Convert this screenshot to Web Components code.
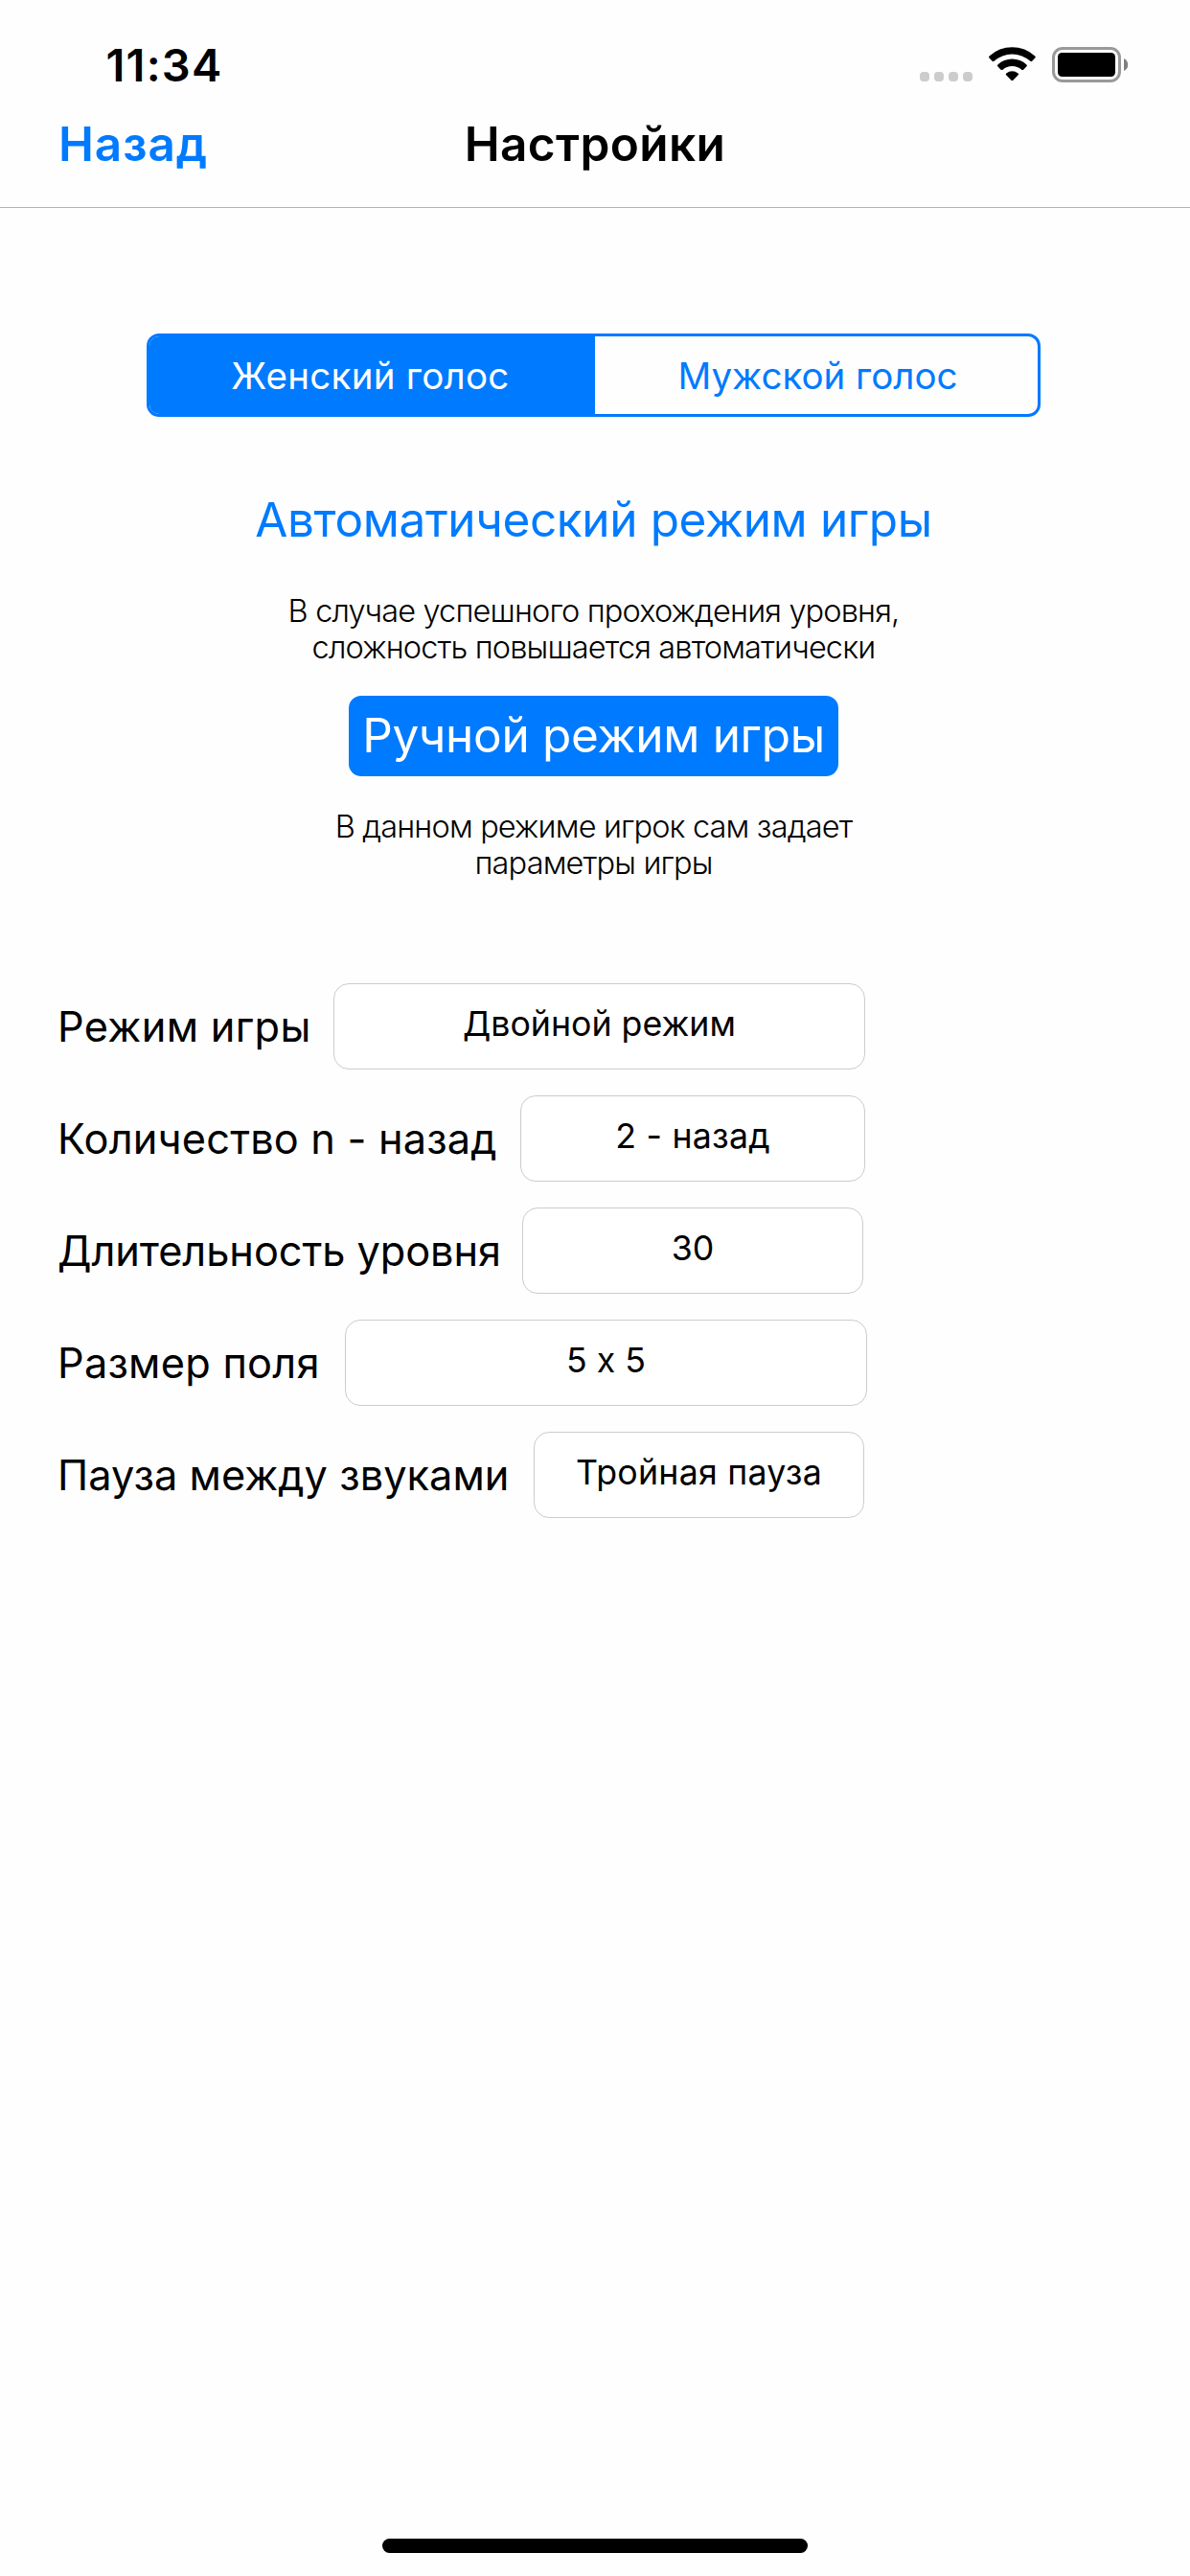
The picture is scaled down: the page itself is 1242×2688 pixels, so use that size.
<!DOCTYPE html>
<html lang="ru">
<head>
<meta charset="utf-8">
<title>Настройки</title>
<style>
  body {
    margin: 0;
    width: 1242px;
    height: 2688px;
    overflow: hidden;
    background-color: #fefefe;
    color: #000;
    font-family: Inter, "Liberation Sans", sans-serif;
    /* keep "5 x 5" from turning into a multiplication sign */
    font-feature-settings: "calt" 0;
  }
</style>
</head>
<body>
<settings-screen>
  <status-bar slot="header" time="11:34"></status-bar>
  <nav-bar slot="header">
    <span slot="back">Назад</span>
    <span slot="title">Настройки</span>
  </nav-bar>

  <segmented-control>
    <segment-item selected style="--track: 0.27px">Женский голос</segment-item>
    <segment-item>Мужской голос</segment-item>
  </segmented-control>

  <mode-option style="--track: -0.37px">
    Автоматический режим игры
    <span slot="note">В случае успешного прохождения уровня,<br>сложность повышается автоматически</span>
  </mode-option>
  <mode-option selected style="--track: -0.3px">
    Ручной режим игры
    <span slot="note">В данном режиме игрок сам задает<br>параметры игры</span>
  </mode-option>

  <settings-list>
    <settings-row label="Режим игры" style="--label: 288px; --field: 555px; --label-track: 0.32px">Двойной режим</settings-row>
    <settings-row label="Количество n - назад" style="--label: 483px; --field: 360px; --label-track: 0.19px; --field-track: 0.24px">2 - назад</settings-row>
    <settings-row label="Длительность уровня" style="--label: 485px; --field: 356px; --label-track: -0.06px">30</settings-row>
    <settings-row label="Размер поля" style="--label: 300px; --field: 545px; --label-track: 0.25px">5 x 5</settings-row>
    <settings-row label="Пауза между звуками" style="--label: 497px; --field: 345px; --label-track: 0.05px; --field-track: 0.24px">Тройная пауза</settings-row>
  </settings-list>

  <home-indicator slot="footer"></home-indicator>
</settings-screen>

<script>
class SettingsScreen extends HTMLElement {
  constructor() {
    super();
    this._root = this.attachShadow({ mode: 'open' });
  }

  connectedCallback() {
    this._root.innerHTML = `
      <style>
        :host {
          display: flex;
          flex-direction: column;
          width: 1242px;
          height: 2688px;
        }

        main {
          flex-grow: 1;
          display: flex;
          flex-direction: column;
          align-items: center;
          padding-top: 131px;
        }
      </style>
      <header><slot name="header"></slot></header>
      <main><slot></slot></main>
      <slot name="footer"></slot>
    `;
  }
}

class StatusBar extends HTMLElement {
  constructor() {
    super();
    this._root = this.attachShadow({ mode: 'open' });
  }

  connectedCallback() {
    this._root.innerHTML = `
      <style>
        :host {
          display: flex;
          justify-content: space-between;
          align-items: flex-start;
          box-sizing: border-box;
          height: 88px;
          padding: 48px 64px 0 110.5px;
        }

        .time {
          font-size: 47px;
          font-weight: 600;
          line-height: 40px;
          letter-spacing: 1.2px;
        }

        svg {
          display: block;
          margin-top: 1px;
        }
      </style>
      <div class="time">${this.getAttribute('time')}</div>
      <svg width="218" height="38" viewBox="0 0 218 38">
        <g fill="#ccc">
          <rect x="0" y="26" width="10" height="10" rx="4"/>
          <rect x="15" y="26" width="10" height="10" rx="4"/>
          <rect x="30" y="26" width="10" height="10" rx="4"/>
          <rect x="45" y="26" width="10" height="10" rx="4"/>
        </g>
        <g>
          <path d="M72.5 11.4 Q71.6 10.4 72.6 9.5 A35 35 0 0 1 120.2 9.5 Q121.2 10.4 120.3 11.4 L117.2 14.8 Q116.3 15.6 115.3 14.8 A28.3 28.3 0 0 0 77.5 14.8 Q76.5 15.6 75.6 14.8 Z"/>
          <path d="M81.3 20.3 Q80.3 19.4 81.4 18.4 A22.2 22.2 0 0 1 111.4 18.4 Q112.5 19.4 111.5 20.3 L108.2 23.7 Q107.2 24.5 106.2 23.7 A15.2 15.2 0 0 0 86.6 23.7 Q85.6 24.5 84.6 23.7 Z"/>
          <path d="M90.1 29.2 Q89.2 28.2 90.3 27.4 A10 10 0 0 1 102.5 27.4 Q103.6 28.2 102.7 29.2 L97.3 34.8 Q96.4 35.6 95.5 34.8 Z"/>
        </g>
        <rect x="139.5" y="1.5" width="69" height="34" rx="9.5" fill="none" stroke="#999" stroke-width="3"/>
        <rect x="144" y="6" width="60" height="25" rx="4.5"/>
        <path d="M213 12 Q217.2 14 217.2 18.5 T213 25 Z" fill="#808080"/>
      </svg>
    `;
  }
}

class NavBar extends HTMLElement {
  constructor() {
    super();
    this._root = this.attachShadow({ mode: 'open' });
  }

  connectedCallback() {
    this._root.innerHTML = `
      <style>
        :host {
          display: grid;
          grid-template-columns: 1fr auto 1fr;
          align-items: center;
          height: 124px;
          padding: 0 61px 4px;
          border-bottom: 1px solid #b2b2b2;
          font-size: 49.5px;
          font-weight: 600;
          line-height: 60px;
        }

        .back {
          color: #007aff;
          letter-spacing: 0.95px;
        }

        .title {
          letter-spacing: 0.38px;
        }
      </style>
      <div class="back"><slot name="back"></slot></div>
      <div class="title"><slot name="title"></slot></div>
    `;
  }
}

class SegmentedControl extends HTMLElement {
  constructor() {
    super();
    this._root = this.attachShadow({ mode: 'open' });
  }

  connectedCallback() {
    this._root.innerHTML = `
      <style>
        :host {
          display: grid;
          grid-template-columns: 465px 462px;
          box-sizing: border-box;
          width: 933px;
          height: 87px;
          margin-right: 3px;
          border: 3px solid #007aff;
          border-radius: 13px;
          overflow: hidden;
        }
      </style>
      <slot></slot>
    `;
  }
}

class SegmentItem extends HTMLElement {
  constructor() {
    super();
    this._root = this.attachShadow({ mode: 'open' });
  }

  connectedCallback() {
    this._root.innerHTML = `
      <style>
        :host {
          display: flex;
          justify-content: center;
          align-items: center;
          padding-left: 3px;
          color: #007aff;
          font-size: 38.5px;
          line-height: 46px;
          letter-spacing: var(--track, 0);
        }

        :host([selected]) {
          padding: 0 4px 0 0;
          background-color: #007aff;
          color: #fff;
        }
      </style>
      <slot></slot>
    `;
  }
}

class ModeOption extends HTMLElement {
  constructor() {
    super();
    this._root = this.attachShadow({ mode: 'open' });
  }

  connectedCallback() {
    this._root.innerHTML = `
      <style>
        :host {
          display: flex;
          flex-direction: column;
          align-items: center;
          margin: 65px 3px 0 0;
        }

        :host([selected]) {
          margin-top: 31px;
        }

        .button {
          height: 84px;
          padding: 0 14px;
          border-radius: 13px;
          color: #007aff;
          font-size: 49.5px;
          line-height: 84px;
          letter-spacing: var(--track, 0);
        }

        :host([selected]) .button {
          background-color: #007aff;
          color: #fff;
          line-height: 82px;
        }

        .note {
          height: 76px;
          margin-top: 35px;
          font-size: 32.5px;
          font-weight: 300;
          line-height: 38.3px;
          letter-spacing: -0.85px;
          text-align: center;
        }

        :host([selected]) .note {
          margin-top: 34px;
        }
      </style>
      <div class="button"><slot></slot></div>
      <div class="note"><slot name="note"></slot></div>
    `;
  }
}

class SettingsList extends HTMLElement {
  constructor() {
    super();
    this._root = this.attachShadow({ mode: 'open' });
  }

  connectedCallback() {
    this._root.innerHTML = `
      <style>
        :host {
          display: flex;
          flex-direction: column;
          align-self: stretch;
          gap: 27px;
          padding: 106px 60px 0;
        }
      </style>
      <slot></slot>
    `;
  }
}

class SettingsRow extends HTMLElement {
  constructor() {
    super();
    this._root = this.attachShadow({ mode: 'open' });
  }

  connectedCallback() {
    this._root.innerHTML = `
      <style>
        :host {
          display: grid;
          grid-template-columns: var(--label) var(--field);
          height: 90px;
        }

        .label {
          font-size: 43.3px;
          line-height: 90px;
          letter-spacing: var(--label-track, 0);
          white-space: nowrap;
        }

        .field {
          box-sizing: border-box;
          height: 90px;
          border: 1px solid #ccc;
          border-radius: 16px;
          background-color: #fff;
          font-size: 35.7px;
          line-height: 82px;
          letter-spacing: var(--field-track, 0);
          text-align: center;
        }
      </style>
      <div class="label">${this.getAttribute('label')}</div>
      <div class="field"><slot></slot></div>
    `;
  }
}

class HomeIndicator extends HTMLElement {
  constructor() {
    super();
    this._root = this.attachShadow({ mode: 'open' });
  }

  connectedCallback() {
    this._root.innerHTML = `
      <style>
        :host {
          display: block;
          width: 444px;
          height: 15px;
          margin: 0 auto 24px;
          border-radius: 7.5px;
          background-color: #000;
        }
      </style>
    `;
  }
}

window.customElements.define('settings-screen', SettingsScreen);
window.customElements.define('status-bar', StatusBar);
window.customElements.define('nav-bar', NavBar);
window.customElements.define('segmented-control', SegmentedControl);
window.customElements.define('segment-item', SegmentItem);
window.customElements.define('mode-option', ModeOption);
window.customElements.define('settings-list', SettingsList);
window.customElements.define('settings-row', SettingsRow);
window.customElements.define('home-indicator', HomeIndicator);
</script>
</body>
</html>
